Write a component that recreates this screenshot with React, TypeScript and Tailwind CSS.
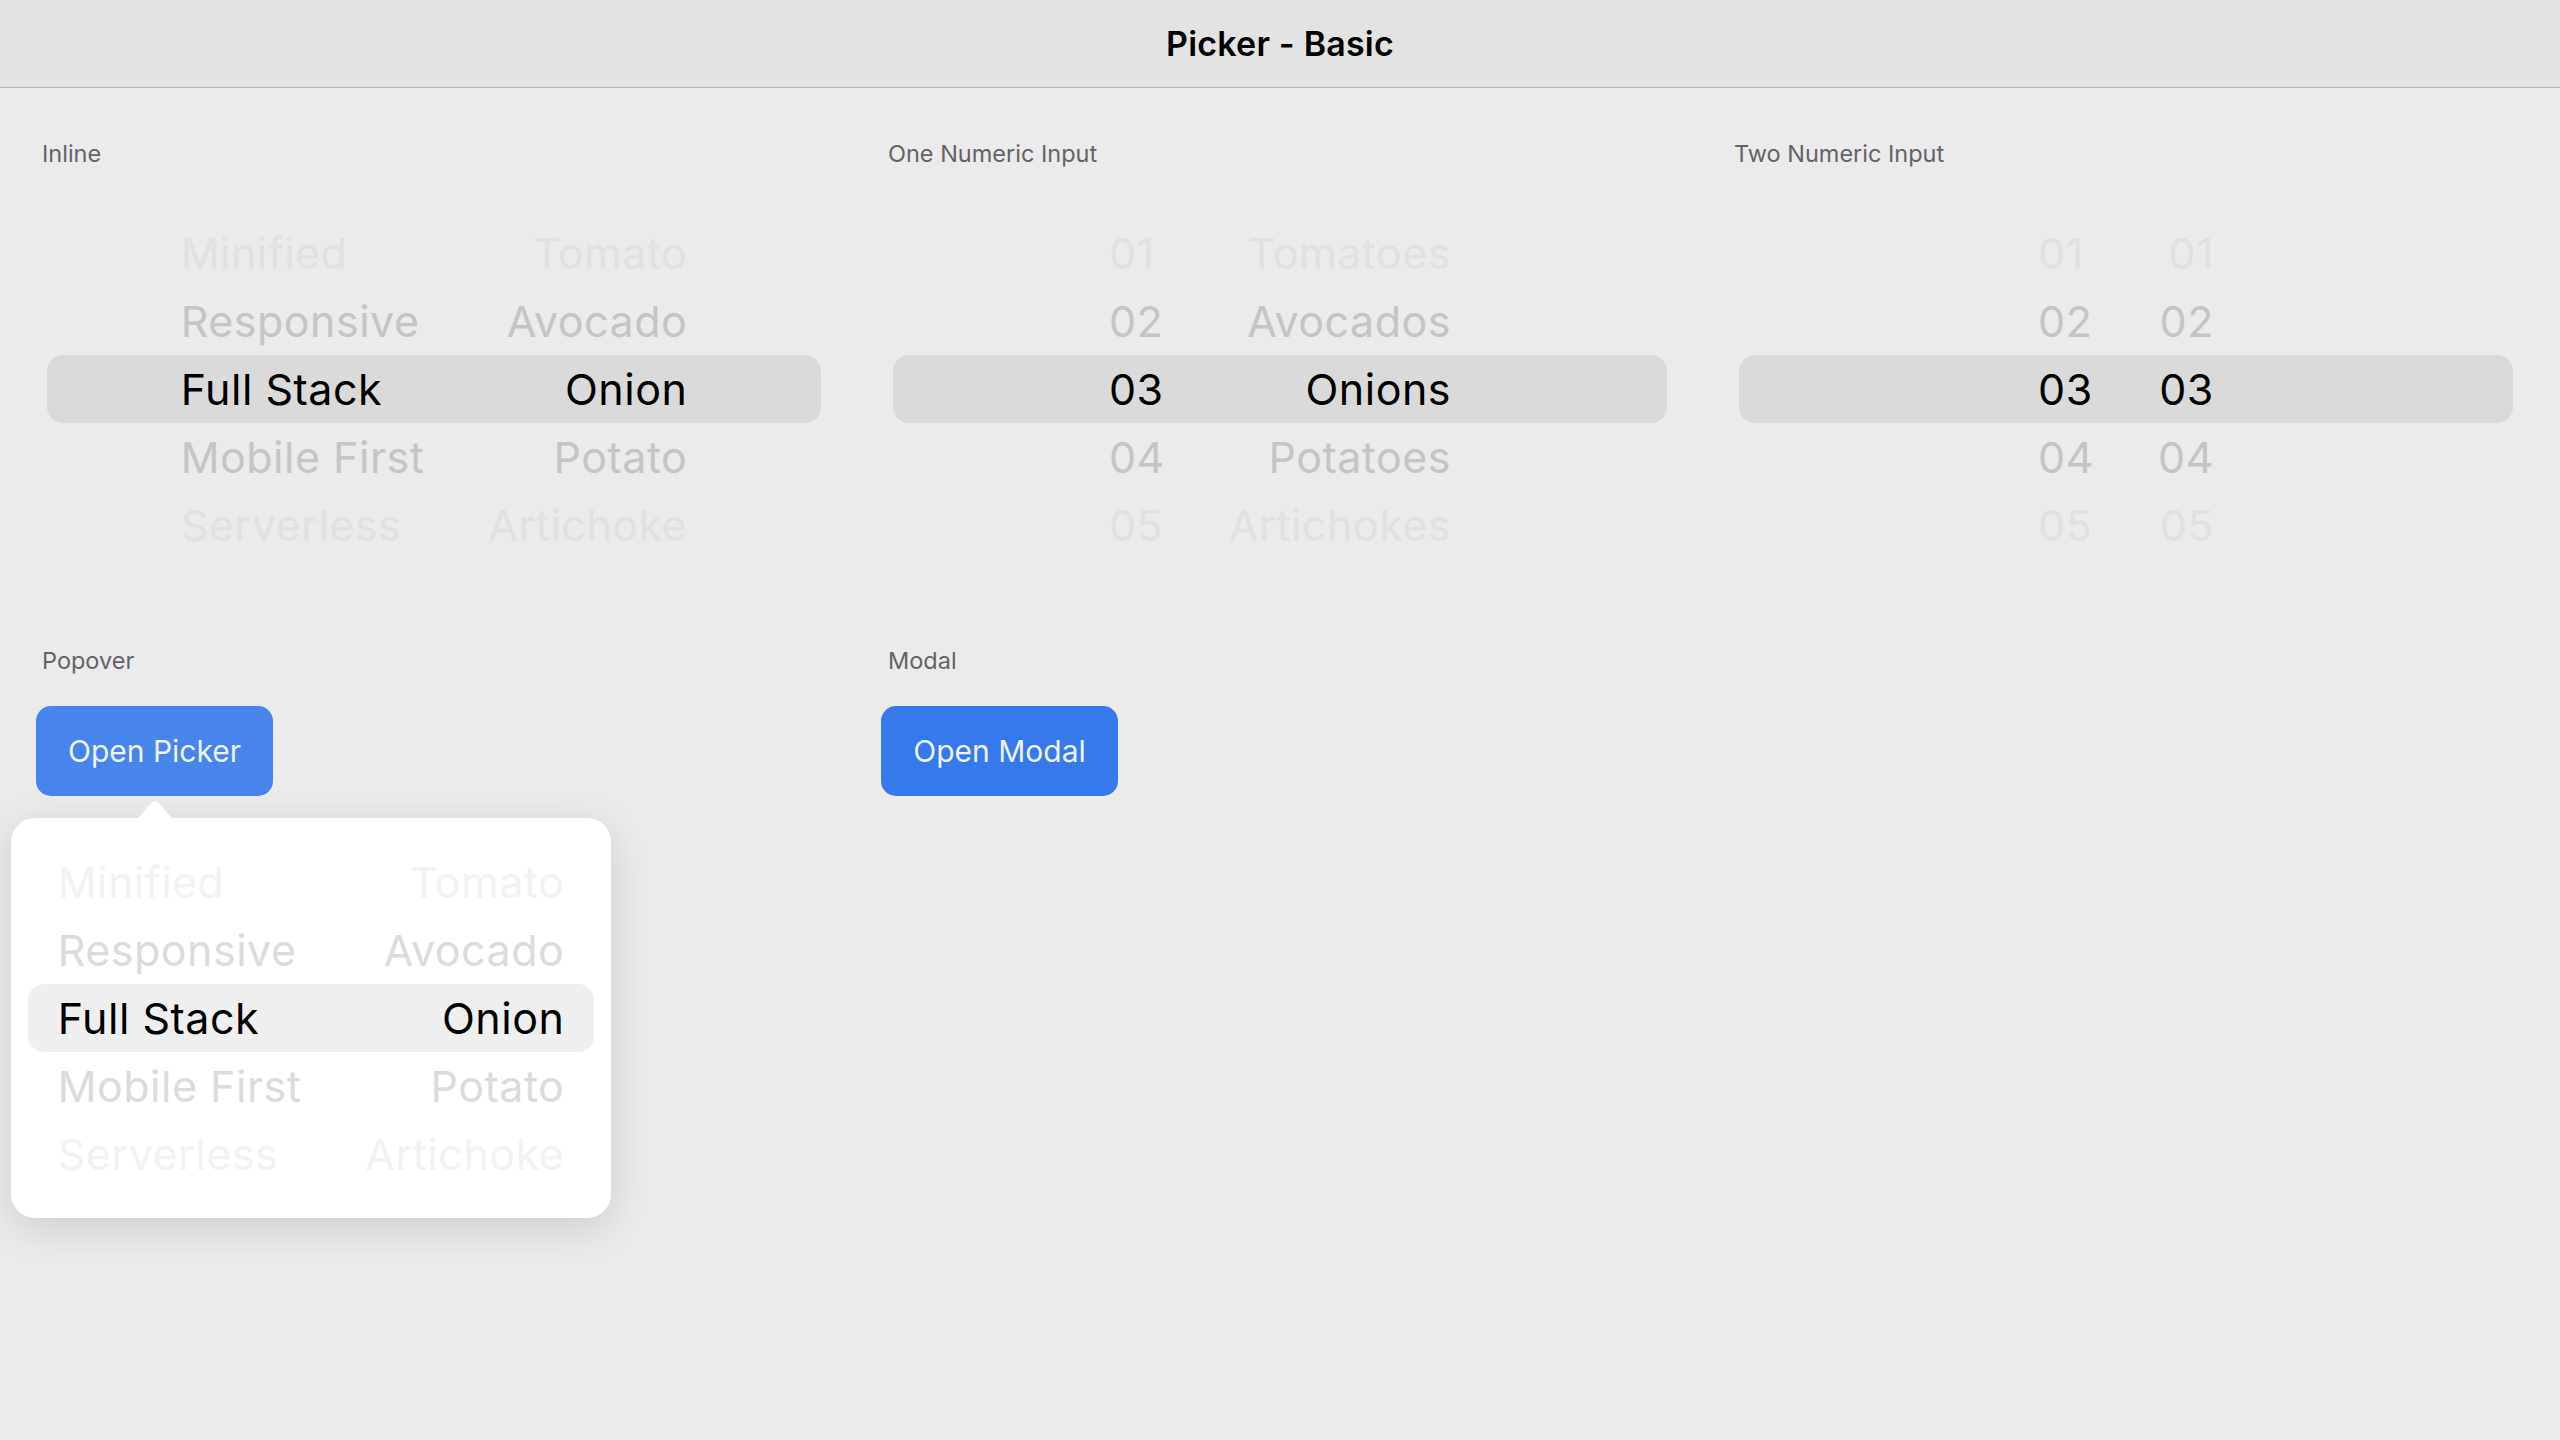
import React from "react";

type Column = {
    items: string[];
    align: "left" | "right";
};

interface PickerProps {
    columns: Column[];
    highlight: string;
    near: string;
    far: string;
}

const font = { fontFamily: "Inter, 'Noto Sans', sans-serif" };

function WheelPicker({ columns, highlight, near, far }: PickerProps) {
    // index 2 is the selected row, the rest fade out
    const colorFor = (i: number) => {
        if (i === 2) return "#000000";
        if (i === 1 || i === 3) return near;
        return far;
    };

    return (
        <div className="relative h-[400px]">
            <div
                className="absolute left-0 right-0 top-[166px] h-[68px] rounded-[16px]"
                style={{ backgroundColor: highlight }}
            />
            <div className="relative flex h-full items-center justify-center gap-[64px]">
                {columns.map((col, ci) => (
                    <div
                        key={ci}
                        className={col.align === "left" ? "flex flex-col items-start" : "flex flex-col items-end"}
                    >
                        {col.items.map((item, i) => (
                            <div
                                key={item + i}
                                className="h-[68px] flex items-center text-[43px] leading-none tracking-[0.5px] whitespace-nowrap"
                                style={{ color: colorFor(i) }}
                            >
                                {item}
                            </div>
                        ))}
                    </div>
                ))}
            </div>
        </div>
    );
}

const stack = ["Minified", "Responsive", "Full Stack", "Mobile First", "Serverless"];
const veggie = ["Tomato", "Avocado", "Onion", "Potato", "Artichoke"];
const veggies = ["Tomatoes", "Avocados", "Onions", "Potatoes", "Artichokes"];
const nums = ["01", "02", "03", "04", "05"];

function SectionLabel({ children }: { children: React.ReactNode }) {
    return <div className="pl-[31px] text-[23.5px] leading-[30px] text-[#636366]">{children}</div>;
}

export default function App() {
    return (
        <div className="min-h-screen w-full bg-[#ebebeb]" style={font}>
            <header className="h-[88px] flex items-center justify-center bg-[#e3e3e3] border-b border-[#b6b6b6]">
                <h1 className="text-[34px] font-semibold text-black tracking-[0.2px]">Picker - Basic</h1>
            </header>

            <main className="px-[11px]">
                <div className="grid grid-cols-3 pt-[51px]">
                    <div>
                        <SectionLabel>Inline</SectionLabel>
                        <div className="mx-[36px] mt-[20px]">
                            <WheelPicker
                                columns={[{ items: stack, align: "left" }, { items: veggie, align: "right" }]}
                                highlight="#dadada"
                                near="#c5c5c5"
                                far="#e1e1e1"
                            />
                        </div>
                    </div>
                    <div>
                        <SectionLabel>One Numeric Input</SectionLabel>
                        <div className="mx-[36px] mt-[20px]">
                            <WheelPicker
                                columns={[{ items: nums, align: "left" }, { items: veggies, align: "right" }]}
                                highlight="#dadada"
                                near="#c5c5c5"
                                far="#e1e1e1"
                            />
                        </div>
                    </div>
                    <div>
                        <SectionLabel>Two Numeric Input</SectionLabel>
                        <div className="mx-[36px] mt-[20px]">
                            <WheelPicker
                                columns={[{ items: nums, align: "left" }, { items: nums, align: "right" }]}
                                highlight="#dadada"
                                near="#c5c5c5"
                                far="#e1e1e1"
                            />
                        </div>
                    </div>
                </div>

                <div className="grid grid-cols-3 pt-[57px]">
                    <div className="relative">
                        <SectionLabel>Popover</SectionLabel>
                        <button className="ml-[25px] mt-[30px] h-[90px] w-[237px] rounded-[15px] bg-[#4784ec] text-[30px] text-[#eef3fd]">
                            Open Picker
                        </button>

                        {/* popover shown open under the button */}
                        <div className="absolute left-0 top-[172px] w-[600px] h-[400px] rounded-[24px] bg-white shadow-[0_10px_40px_rgba(0,0,0,0.13)] z-10">
                            <svg
                                className="absolute left-[126px] top-[-19px]"
                                width="36"
                                height="20"
                                viewBox="0 0 36 20"
                            >
                                <path d="M0 20 L14 4.5 Q18 0 22 4.5 L36 20 Z" fill="#ffffff" />
                            </svg>
                            <div className="px-[17px]">
                                <WheelPicker
                                    columns={[{ items: stack, align: "left" }, { items: veggie, align: "right" }]}
                                    highlight="#efefef"
                                    near="#dbdbdb"
                                    far="#f2f2f2"
                                />
                            </div>
                        </div>
                    </div>
                    <div>
                        <SectionLabel>Modal</SectionLabel>
                        <button className="ml-[24px] mt-[30px] h-[90px] w-[237px] rounded-[15px] bg-[#3579ec] text-[30px] text-[#eef3fd]">
                            Open Modal
                        </button>
                    </div>
                    <div />
                </div>
            </main>
        </div>
    );
}
